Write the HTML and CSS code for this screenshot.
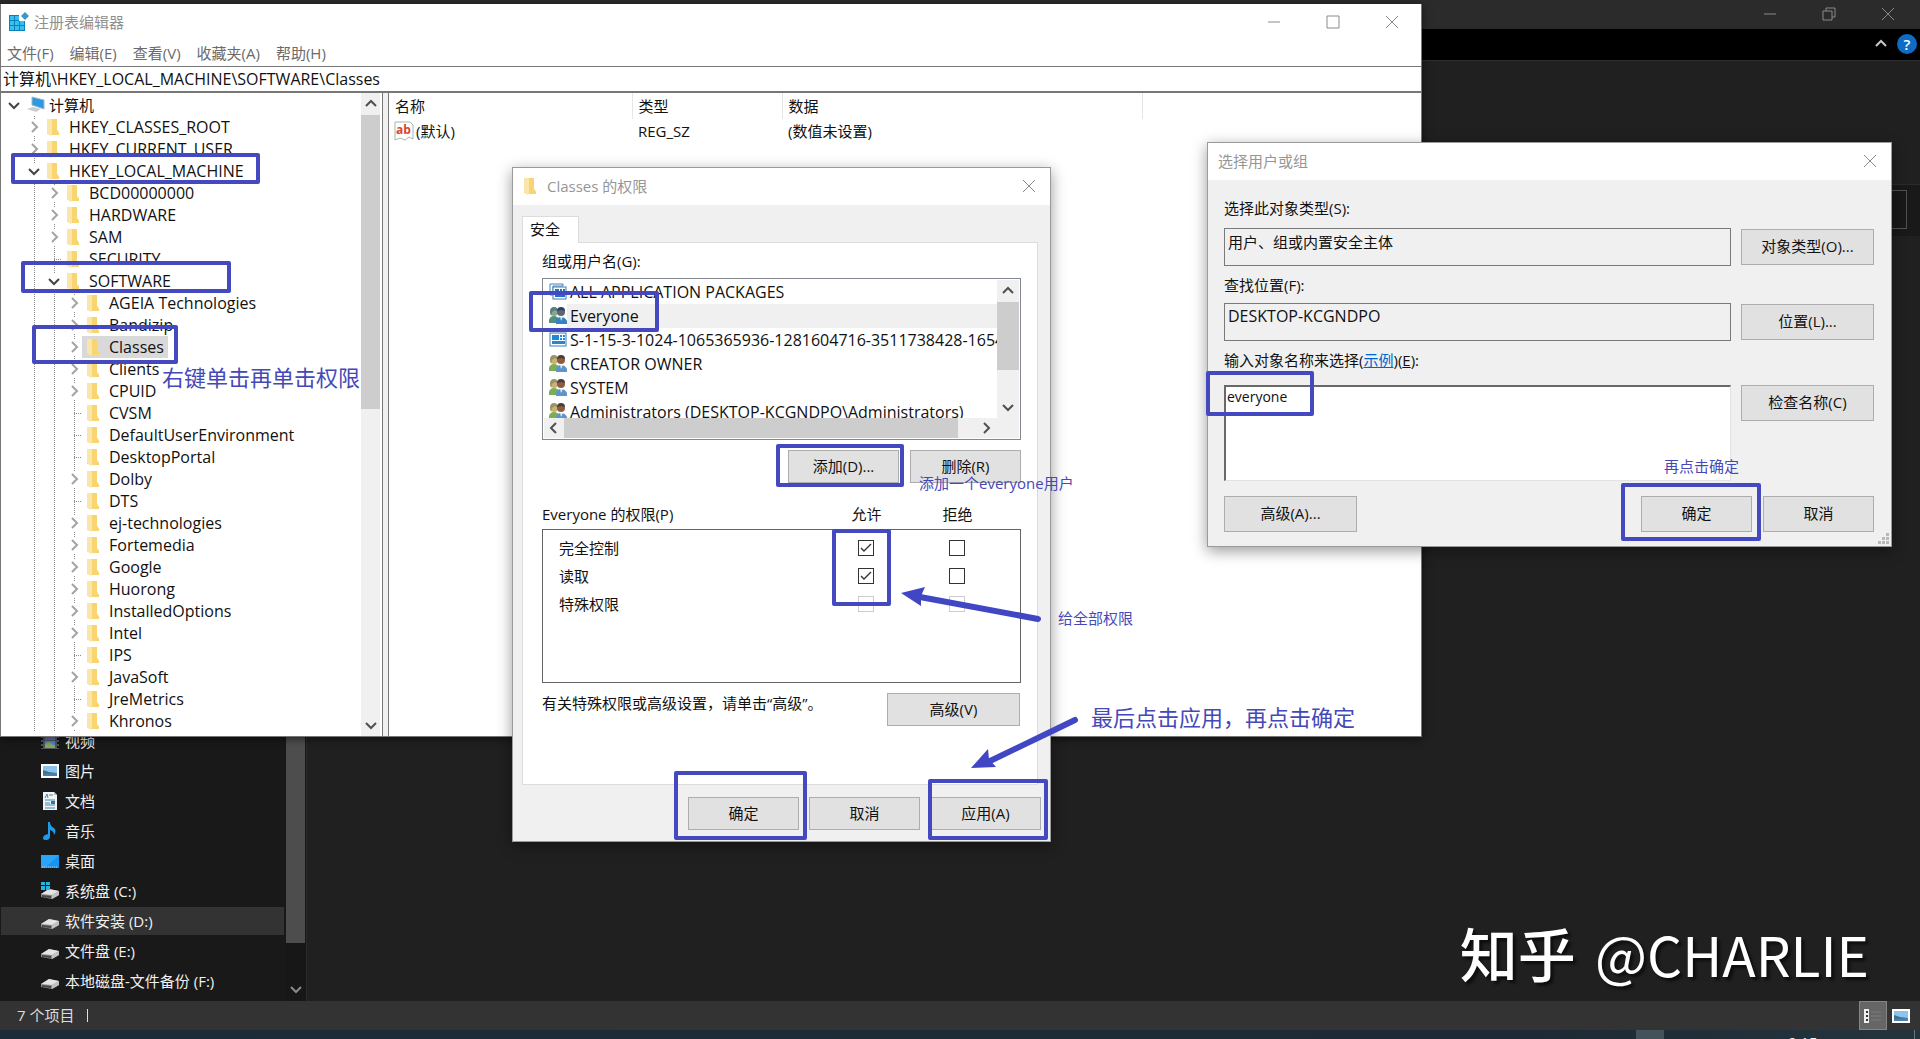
FILE: index.html
```html
<!DOCTYPE html>
<html lang="zh-CN">
<head>
<meta charset="utf-8">
<title>注册表编辑器</title>
<link rel="stylesheet" href="styles.css">
</head>
<body>
<svg class="defs" aria-hidden="true">
  <defs>
    <symbol id="folder" viewBox="0 0 18 18">
      <path d="M0 1h10v11l2 3v2H4L0 16z" fill="#f9dc86"/>
      <path d="M5 1h5v11l2 3v2H5z" fill="#f8d570"/>
      <path d="M0 1h4l1 1v15l-2 1-1-2-2-1z" fill="#fae6ab"/>
    </symbol>
    <symbol id="right" viewBox="0 0 16 16"><path d="M6 3l5 5-5 5" fill="none" stroke="#a3a3a3" stroke-width="2"/></symbol>
    <symbol id="down" viewBox="0 0 16 16"><path d="M3 6l5 5 5-5" fill="none" stroke="currentColor" stroke-width="2"/></symbol>
    <symbol id="up" viewBox="0 0 16 16"><path d="M3 10l5-5 5 5" fill="none" stroke="currentColor" stroke-width="2"/></symbol>
    <symbol id="close" viewBox="0 0 16 16"><path d="M2 2l12 12M14 2L2 14" fill="none" stroke="currentColor"/></symbol>
    <symbol id="users" viewBox="0 0 18 18">
      <circle cx="5" cy="5" r="4" fill="#c9b37d"/><path d="M1 5q0-5 4-5t4 5l-3-2-3 2-1 4z" fill="#9a9465"/>
      <path d="M0 16v-3q1-4 5-4t5 4v3z" fill="#7fae52"/>
      <circle cx="12" cy="5" r="4" fill="#8a5d42"/><path d="M8 4q0-4 4-4t4 4l-4-1z" fill="#4b3c37"/>
      <path d="M7 17v-3q1-4 5-4t6 4v3z" fill="#5e94cc"/><path d="M11 10l1 4 2-4z" fill="#dce9f5"/>
    </symbol>
    <symbol id="users-sel" viewBox="0 0 18 18">
      <circle cx="5" cy="5" r="4" fill="#8ba39a"/><path d="M1 5q0-5 4-5t4 5l-3-2-3 2-1 4z" fill="#587c7c"/>
      <path d="M0 16v-3q1-4 5-4t5 4v3z" fill="#518f78"/>
      <circle cx="12" cy="5" r="4" fill="#5c6670"/><path d="M8 4q0-4 4-4t4 4l-4-1z" fill="#2b4560"/>
      <path d="M7 17v-3q1-4 5-4t6 4v3z" fill="#3583c6"/><path d="M11 10l1 4 2-4z" fill="#c5ddf2"/>
    </symbol>
    <symbol id="package" viewBox="0 0 18 18">
      <rect x="1" y="2" width="16" height="13" fill="#fff" stroke="#3f7db8"/>
      <path d="M3 4h7v5H3zM11 4h2v2h-2zM14 4h2v2h-2zM11 7h2v2h-2zM14 7h2v2h-2zM3 10h13v3H3z" fill="#2586d4"/>
    </symbol>
    <symbol id="packages" viewBox="0 0 18 18">
      <path d="M1 12V1h13v2H4v9z" fill="#fff" stroke="#4b80b2"/>
      <rect x="4" y="4" width="13" height="12" fill="#fff" stroke="#3f7db8"/>
      <path d="M6 6h4v4H6zM11 6h2v2h-2zM14 6h2v2h-2zM11 9h5v2h-5zM6 11h10v3H6z" fill="#1f6fc4"/>
    </symbol>
    <symbol id="drive" viewBox="0 0 18 18">
      <path d="M0 12l8-5 10 2v4l-7 4-11-2z" fill="#8d8d8d"/>
      <path d="M0 12l8-5 10 2-7 4z" fill="#e4e4e4"/><path d="M1 13l9 1v2l-9-1z" fill="#474747"/><path d="M11 13l7-4v4l-7 4z" fill="#c2c2c2"/>
    </symbol>
    <symbol id="picture" viewBox="0 0 18 18">
      <rect y="2" width="18" height="14" fill="#fff"/><rect x="2" y="4" width="14" height="10" fill="#8cc4ee"/>
      <path d="M2 8l6 2 8 1v3H2z" fill="#3d7486"/><path d="M2 12l14-1v3H2z" fill="#4a7fb4"/>
    </symbol>
  </defs>
</svg>

<div class="explorer">
  <div class="ex-title">
    <button class="ico" aria-label="最小化"><svg viewBox="0 0 16 16"><path d="M2 8h12" stroke="currentColor"/></svg></button>
    <button class="ico" aria-label="还原"><svg viewBox="0 0 16 16"><path d="M2 5h9v9H2zM5 5V2h9v9h-3" fill="none" stroke="currentColor"/></svg></button>
    <button class="ico" aria-label="关闭"><svg><use href="#close"/></svg></button>
  </div>
  <div class="ribbon">
    <button class="ico" aria-label="折叠功能区"><svg><use href="#up"/></svg></button>
    <button class="help" aria-label="帮助">?</button>
  </div>
  <div class="ex-body">
    <nav class="side">
      <ul class="places">
        <li><svg viewBox="0 0 18 18"><path d="M0 1h18v16H0z" fill="#51565c"/><path d="M4 1h10v7H4z" fill="#6d6aa8"/><path d="M4 9h10v7H4z" fill="#4b86d8"/><path d="M4 12l4-2 6 4v2H4z" fill="#83a85d"/><path d="M1 2v15M17 2v15" stroke="#111" stroke-width="2" stroke-dasharray="2 2"/></svg>视频</li>
        <li><svg><use href="#picture"/></svg>图片</li>
        <li><svg viewBox="0 0 18 18"><path d="M2 0h11l3 3v15H2z" fill="#f3f3f3"/><path d="M13 0v3h3" fill="#bbb"/><path d="M4 6l2-4 1 4M8 3h4M4 8h10M4 11h5M4 13h10M4 16h10" fill="none" stroke="#3a8bb4"/><path d="M10 9h4v3h-4z" fill="#41729a"/></svg>文档</li>
        <li><svg viewBox="0 0 18 18"><path d="M9 0q0 4 4 6 3 3 0 7 0-4-4-5v6q0 4-4 4-3 0-3-2 0-3 5-4V0z" fill="#1e9bea"/></svg>音乐</li>
        <li><svg viewBox="0 0 18 18"><path d="M0 3h18v13H0z" fill="#1494f3"/><path d="M0 3h18L4 16H0z" fill="#2ba5fb"/><path d="M1 15h16" stroke="#9bd5ff" stroke-dasharray="1 1"/></svg>桌面</li>
        <li><svg viewBox="0 0 18 18"><use href="#drive"/><path d="M0 0h4v3H0zM5 0h4v3H5zM0 4h4v4H0zM5 4h4v4H5z" fill="#24b4e0"/></svg>系统盘 (C:)</li>
        <li class="on"><svg><use href="#drive"/></svg>软件安装 (D:)</li>
        <li><svg><use href="#drive"/></svg>文件盘 (E:)</li>
        <li><svg><use href="#drive"/></svg>本地磁盘-文件备份 (F:)</li>
      </ul>
      <div class="side-scroll"><span class="thumb"></span><svg><use href="#down"/></svg></div>
    </nav>
    <main class="files"><div class="searchbar"><input aria-label="搜索"></div></main>
  </div>
  <footer class="status">
    <span class="count">7 个项目</span><i class="bar"></i>
    <button class="view on" aria-label="详细信息"><svg viewBox="0 0 18 18"><path d="M0 2h5v14H0z" fill="#eee"/><path d="M2 4h2v2H2zM2 8h2v2H2zM2 12h2v2H2z" fill="#333"/><path d="M7 5h10M7 9h10M7 13h10" stroke="#7d7d7d"/></svg></button>
    <button class="view" aria-label="大图标"><svg><use href="#picture"/></svg></button>
  </footer>
  <div class="taskbar"><span class="task"></span><span class="clock">9:15</span></div>
  <p class="mark"><b>知乎</b> @CHARLIE</p>
</div>

<section class="regedit">
  <header class="re-title">
    <svg viewBox="0 0 20 20"><path d="M0 3h16v16H0z" fill="#0e7fb8"/><path d="M1 4h4v4H1zM6 4h4v4H6zM1 9h4v4H1zM6 9h4v4H6zM11 9h4v4h-4zM1 14h4v4H1zM6 14h4v4H6zM11 14h4v4h-4z" fill="#35c0ee"/><path d="M10 2h7v7h-7z" fill="#fff"/><path d="M12 4l4-4 4 4-4 4z" fill="#3d96c4"/></svg>
    <h1>注册表编辑器</h1>
    <button class="ico" aria-label="最小化"><svg viewBox="0 0 16 16"><path d="M2 8h12" stroke="currentColor"/></svg></button>
    <button class="ico" aria-label="最大化"><svg viewBox="0 0 16 16"><path d="M2 2h12v12H2z" fill="none" stroke="currentColor"/></svg></button>
    <button class="ico" aria-label="关闭"><svg><use href="#close"/></svg></button>
  </header>
  <nav class="menu"><button>文件(F)</button><button>编辑(E)</button><button>查看(V)</button><button>收藏夹(A)</button><button>帮助(H)</button></nav>
  <input class="address" aria-label="地址" value="计算机\HKEY_LOCAL_MACHINE\SOFTWARE\Classes">
  <div class="panes">
    <div class="tree-pane">
      <ul class="tree">
        <li><div class="row root"><svg class="tw"><use href="#down"/></svg><span class="node"><svg viewBox="0 0 18 18"><path d="M5 1l12 3v9L5 9z" fill="#2f98e2" stroke="#9cb7c9"/><path d="M0 13l6-2 8 2-5 3z" fill="#c9ced2"/></svg>计算机</span></div>
          <ul>
            <li><div class="row"><svg class="tw"><use href="#right"/></svg><span class="node"><svg><use href="#folder"/></svg>HKEY_CLASSES_ROOT</span></div></li>
            <li><div class="row"><svg class="tw"><use href="#right"/></svg><span class="node"><svg><use href="#folder"/></svg>HKEY_CURRENT_USER</span></div></li>
            <li><div class="row"><svg class="tw"><use href="#down"/></svg><span class="node"><svg><use href="#folder"/></svg>HKEY_LOCAL_MACHINE</span></div>
              <ul>
                <li><div class="row"><svg class="tw"><use href="#right"/></svg><span class="node"><svg><use href="#folder"/></svg>BCD00000000</span></div></li>
                <li><div class="row"><svg class="tw"><use href="#right"/></svg><span class="node"><svg><use href="#folder"/></svg>HARDWARE</span></div></li>
                <li><div class="row"><svg class="tw"><use href="#right"/></svg><span class="node"><svg><use href="#folder"/></svg>SAM</span></div></li>
                <li><div class="row"><i class="leaf"></i><span class="node"><svg><use href="#folder"/></svg>SECURITY</span></div></li>
                <li><div class="row"><svg class="tw"><use href="#down"/></svg><span class="node"><svg><use href="#folder"/></svg>SOFTWARE</span></div>
                  <ul>
                    <li><div class="row"><svg class="tw"><use href="#right"/></svg><span class="node"><svg><use href="#folder"/></svg>AGEIA Technologies</span></div></li>
                    <li><div class="row"><svg class="tw"><use href="#right"/></svg><span class="node"><svg><use href="#folder"/></svg>Bandizip</span></div></li>
                    <li><div class="row"><svg class="tw"><use href="#right"/></svg><span class="node sel"><svg><use href="#folder"/></svg>Classes</span></div></li>
                    <li><div class="row"><svg class="tw"><use href="#right"/></svg><span class="node"><svg><use href="#folder"/></svg>Clients</span></div></li>
                    <li><div class="row"><svg class="tw"><use href="#right"/></svg><span class="node"><svg><use href="#folder"/></svg>CPUID</span></div></li>
                    <li><div class="row"><i class="leaf"></i><span class="node"><svg><use href="#folder"/></svg>CVSM</span></div></li>
                    <li><div class="row"><i class="leaf"></i><span class="node"><svg><use href="#folder"/></svg>DefaultUserEnvironment</span></div></li>
                    <li><div class="row"><i class="leaf"></i><span class="node"><svg><use href="#folder"/></svg>DesktopPortal</span></div></li>
                    <li><div class="row"><svg class="tw"><use href="#right"/></svg><span class="node"><svg><use href="#folder"/></svg>Dolby</span></div></li>
                    <li><div class="row"><i class="leaf"></i><span class="node"><svg><use href="#folder"/></svg>DTS</span></div></li>
                    <li><div class="row"><svg class="tw"><use href="#right"/></svg><span class="node"><svg><use href="#folder"/></svg>ej-technologies</span></div></li>
                    <li><div class="row"><svg class="tw"><use href="#right"/></svg><span class="node"><svg><use href="#folder"/></svg>Fortemedia</span></div></li>
                    <li><div class="row"><svg class="tw"><use href="#right"/></svg><span class="node"><svg><use href="#folder"/></svg>Google</span></div></li>
                    <li><div class="row"><svg class="tw"><use href="#right"/></svg><span class="node"><svg><use href="#folder"/></svg>Huorong</span></div></li>
                    <li><div class="row"><svg class="tw"><use href="#right"/></svg><span class="node"><svg><use href="#folder"/></svg>InstalledOptions</span></div></li>
                    <li><div class="row"><svg class="tw"><use href="#right"/></svg><span class="node"><svg><use href="#folder"/></svg>Intel</span></div></li>
                    <li><div class="row"><i class="leaf"></i><span class="node"><svg><use href="#folder"/></svg>IPS</span></div></li>
                    <li><div class="row"><svg class="tw"><use href="#right"/></svg><span class="node"><svg><use href="#folder"/></svg>JavaSoft</span></div></li>
                    <li><div class="row"><i class="leaf"></i><span class="node"><svg><use href="#folder"/></svg>JreMetrics</span></div></li>
                    <li><div class="row"><svg class="tw"><use href="#right"/></svg><span class="node"><svg><use href="#folder"/></svg>Khronos</span></div></li>
                  </ul>
                </li>
              </ul>
            </li>
          </ul>
        </li>
      </ul>
      <div class="vscroll"><svg><use href="#up"/></svg><span class="thumb"></span><svg><use href="#down"/></svg></div>
    </div>
    <div class="values">
      <table>
        <colgroup><col class="c-name"><col class="c-type"><col class="c-data"><col></colgroup>
        <thead><tr><th>名称</th><th>类型</th><th>数据</th><th></th></tr></thead>
        <tbody><tr><td><span class="val"><svg viewBox="0 0 20 20"><path d="M1 1h15l3 3v14l-4-2-4 3-5-2-5 2z" fill="#fff" stroke="#a9b3ab"/><text x="2" y="13" font-size="12" font-weight="700" fill="#d8452c">ab</text></svg>(默认)</span></td><td>REG_SZ</td><td>(数值未设置)</td><td></td></tr></tbody>
      </table>
    </div>
  </div>
</section>

<section class="dialog perms">
  <header><svg><use href="#folder"/></svg><h2>Classes 的权限</h2><button class="ico" aria-label="关闭"><svg><use href="#close"/></svg></button></header>
  <div class="tabs"><button class="tab">安全</button></div>
  <div class="sheet">
    <p class="lbl">组或用户名(G):</p>
    <div class="userbox">
      <ul class="users">
        <li><svg><use href="#packages"/></svg><span>ALL APPLICATION PACKAGES</span></li>
        <li class="sel"><svg><use href="#users-sel"/></svg><span>Everyone</span></li>
        <li><svg><use href="#package"/></svg><span>S-1-15-3-1024-1065365936-1281604716-3511738428-1654</span></li>
        <li><svg><use href="#users"/></svg><span>CREATOR OWNER</span></li>
        <li><svg><use href="#users"/></svg><span>SYSTEM</span></li>
        <li><svg><use href="#users"/></svg><span>Administrators (DESKTOP-KCGNDPO\Administrators)</span></li>
      </ul>
      <div class="vscroll"><svg><use href="#up"/></svg><span class="thumb"></span><svg><use href="#down"/></svg></div>
      <div class="hscroll"><svg class="left"><use href="#down"/></svg><span class="thumb"></span><svg class="rt"><use href="#down"/></svg></div>
    </div>
    <div class="pair"><button class="btn">添加(D)...</button><button class="btn">删除(R)</button></div>
    <div class="phead"><span>Everyone 的权限(P)</span><span class="mid">允许</span><span class="mid">拒绝</span></div>
    <div class="pbox">
      <div class="prow"><span>完全控制</span><input type="checkbox" checked aria-label="完全控制 允许"><input type="checkbox" aria-label="完全控制 拒绝"></div>
      <div class="prow"><span>读取</span><input type="checkbox" checked aria-label="读取 允许"><input type="checkbox" aria-label="读取 拒绝"></div>
      <div class="prow"><span>特殊权限</span><input type="checkbox" disabled aria-label="特殊权限 允许"><input type="checkbox" disabled aria-label="特殊权限 拒绝"></div>
    </div>
    <div class="adv"><p class="lbl">有关特殊权限或高级设置，请单击“高级”。</p><button class="btn wide">高级(V)</button></div>
  </div>
  <footer><button class="btn">确定</button><button class="btn">取消</button><button class="btn">应用(A)</button></footer>
</section>

<section class="dialog picker">
  <header><h2>选择用户或组</h2><button class="ico" aria-label="关闭"><svg><use href="#close"/></svg></button></header>
  <div class="form">
    <label class="lbl" for="otype">选择此对象类型(S):</label>
    <div class="line first"><input id="otype" readonly value="用户、组或内置安全主体"><button class="btn wide">对象类型(O)...</button></div>
    <label class="lbl" for="place">查找位置(F):</label>
    <div class="line"><input class="latin" id="place" readonly value="DESKTOP-KCGNDPO"><button class="btn wide">位置(L)...</button></div>
    <label class="lbl" for="names">输入对象名称来选择(<a href="#names">示例</a>)(<u>E</u>):</label>
    <div class="line area"><textarea id="names">everyone</textarea><button class="btn wide">检查名称(C)</button></div>
    <footer><button class="btn wide">高级(A)...</button><span class="grow"></span><button class="btn">确定</button><button class="btn">取消</button></footer>
  </div>
  <svg class="grip" viewBox="0 0 12 12"><path d="M9 0h3v3H9zM5 4h3v3H5zM9 4h3v3H9zM1 8h3v3H1zM5 8h3v3H5zM9 8h3v3H9z" fill="#b9b9b9"/></svg>
</section>

<div class="notes">
  <i class="box hklm"></i><i class="box software"></i><i class="box classes"></i>
  <i class="box everyone"></i><i class="box add"></i><i class="box checks"></i><i class="box ok"></i><i class="box apply"></i>
  <i class="box typed"></i><i class="box ok2"></i>
  <svg class="arrows" viewBox="900 580 200 200">
    <path d="M1038 619L920 597M1075 720L988 762" stroke="#4146c4" stroke-width="6" stroke-linecap="round"/>
    <path d="M901 593l24-6-4 9 0 10zM971 768l17-19 1 10 7 8z" fill="#4146c4"/>
  </svg>
  <span class="note big n-menu">右键单击再单击权限</span>
  <span class="note n-add">添加一个everyone用户</span>
  <span class="note n-all">给全部权限</span>
  <span class="note big n-last">最后点击应用，再点击确定</span>
  <span class="note n-ok">再点击确定</span>
</div>
</body>
</html>
```
FILE: styles.css
```css
* { box-sizing: border-box; }
body {
  margin: 0;
  height: 100vh;
  overflow: hidden;
  position: relative;
  background: #202020;
  color: #111;
  font: 15px/20px "Open Sans", "Noto Sans CJK SC", sans-serif;
}
ul { list-style: none; margin: 0; padding: 0; }
h1, h2, p { margin: 0; font-size: 15px; font-weight: 400; line-height: 20px; }
button, input, textarea { font: inherit; color: inherit; margin: 0; border-radius: 0; outline: 0; }
button { padding: 0; border: 0; background: none; }
svg { flex: none; width: 18px; height: 18px; display: block; }
.defs { position: absolute; width: 0; height: 0; }
.ico { width: 20px; height: 20px; display: grid; place-items: center; color: #8a8a8a; }
.ico svg { width: 16px; height: 16px; }

/* file explorer behind the other windows */
.explorer { height: 100%; display: flex; flex-direction: column; color: #f0f0f0; }
.ex-title { height: 29px; flex: none; background: #2b2b2b; display: flex; justify-content: flex-end; align-items: center; gap: 39px; padding: 0 22px 2px 0; }
.ribbon { height: 32px; flex: none; background: #000; border-bottom: 1px solid #2f2f2f; display: flex; justify-content: flex-end; align-items: center; gap: 6px; padding: 0 3px 2px 0; }
.ribbon .ico { color: #c8c8c8; }
.help { width: 20px; height: 20px; border-radius: 50%; background: #0f6cc4; color: #fff; font-weight: 600; }
.ex-body { flex: 1; min-height: 0; display: flex; }
.side { width: 307px; background: #191919; border-right: 1px solid #2a2a2a; display: flex; }
.places { flex: 1; display: flex; flex-direction: column; justify-content: flex-end; padding: 0 1px 6px; }
.places li { height: 28px; margin-top: 2px; flex: none; display: flex; align-items: center; gap: 6px; padding-left: 40px; }
.places .on { background: #333; }
.side-scroll { width: 21px; display: flex; flex-direction: column; align-items: center; background: #171717; color: #8a8a8a; }
.side-scroll .thumb { flex: 1; width: 19px; background: #4d4d4d; }
.side-scroll svg { width: 16px; height: 16px; margin: 38px 0 4px; }
.files { flex: 1; padding-top: 123px; }
.searchbar { height: 52px; border-top: 1px solid #2b2b2b; background: #191919; padding: 5px 13px 0 0; display: flex; justify-content: flex-end; }
.searchbar input { width: 300px; height: 39px; border: 1px solid #535353; background: #191919; }
.status { height: 29px; flex: none; background: #333; display: flex; align-items: center; padding: 0 5px 0 17px; color: #dcdcdc; }
.count { margin-right: 13px; padding-bottom: 2px; }
.bar { width: 1px; height: 13px; background: #e0e0e0; margin-right: auto; }
.view { width: 28px; height: 29px; display: grid; place-items: center; }
.view.on { background: #666; border: 1px solid #858585; }
.taskbar { height: 9px; flex: none; overflow: hidden; background: linear-gradient(90deg, #1c2b39, #1d2a35 80%, #24343d); display: flex; justify-content: flex-end; }
.task { width: 28px; background: #44525a; margin-right: 124px; }
.clock { width: 127px; padding-top: 2px; border-right: 1px solid #6b767c; margin-right: 5px; }
.mark { position: absolute; right: 51px; bottom: 50px; font: 55px/72px "Noto Sans CJK SC", sans-serif; color: #fff; text-shadow: 3px 3px 3px #0009; white-space: nowrap; }
.mark b { font-size: 58px; font-weight: 500; margin-right: 7px; }

/* registry editor */
.regedit { position: absolute; left: 0; top: 4px; right: 498px; background: #fff; border: 1px solid #777; border-width: 0 1px 1px; box-shadow: 0 2px 8px #0008; }
.re-title { height: 38px; display: flex; align-items: center; gap: 5px; padding: 0 19px 2px 8px; color: #8f8f8f; }
.re-title > svg { width: 20px; height: 20px; }
.re-title h1 { flex: 1; }
.re-title .ico { margin-left: 34px; }
.menu { height: 24px; display: flex; align-items: center; gap: 16px; padding: 0 0 2px 6px; color: #6b6b6b; }
.address { display: block; width: 100%; height: 26px; padding: 0 2px 2px; border: 1px solid #777; border-width: 1px 0; background: #fff; font-size: 16px; }
.panes { display: flex; background: #f0f0f0; border-top: 1px solid #777; }
.tree-pane { width: 382px; display: flex; background: #fff; border-right: 1px solid #777; padding-right: 2px; }
.tree { flex: 1; padding: 1px 0 4px 5px; font-size: 16px; }
.tree ul { padding-left: 20px; background: repeating-linear-gradient(#8a8a8a 0 1px, #fff 1px 2px) 28px 0 / 1px 100% no-repeat; }
.row { height: 22px; display: flex; align-items: center; }
.root { font-size: 15px; }
.tw { width: 16px; height: 16px; background: #fff; color: #444; }
.leaf { width: 8px; height: 1px; margin-left: 8px; background: repeating-linear-gradient(90deg, #8a8a8a 0 1px, #fff 1px 2px); }
.node { display: flex; align-items: center; gap: 4px; height: 22px; padding: 0 4px 0 5px; white-space: nowrap; }
.node.sel { background: #d9d9d9; }
.vscroll { width: 19px; display: flex; flex-direction: column; align-items: center; background: #f0f0f0; color: #505050; }
.vscroll svg { width: 16px; height: 16px; margin: 3px 0; }
.vscroll .thumb { width: 100%; height: 294px; margin-bottom: auto; background: #cdcdcd; }
.values { flex: 1; margin-left: 5px; border-left: 1px solid #777; background: #fff; }
.values table { width: 100%; table-layout: fixed; border-collapse: collapse; }
.c-name { width: 243px; }
.c-type { width: 150px; }
.c-data { width: 360px; }
.values th, .values td { height: 26px; padding: 0 6px; text-align: left; font-weight: 400; }
.values th { border-right: 1px solid #e5e5e5; }
.values th:last-child { border: 0; }
.values td { height: 24px; }
.values td:first-child { padding-left: 5px; }
.val { display: flex; align-items: center; gap: 2px; }
.val svg { width: 20px; height: 20px; }

/* dialogs */
.dialog { position: absolute; background: #f0f0f0; border: 1px solid #9a9a9a; box-shadow: 0 4px 14px #0006; }
.dialog > header { height: 37px; background: #fff; color: #969696; display: flex; align-items: center; padding: 0 11px 2px 10px; }
.dialog > header h2 { flex: 1; }
.btn { width: 111px; height: 33px; padding-bottom: 2px; background: #e1e1e1; border: 1px solid #adadad; }
.btn.wide { width: 133px; }
.perms { left: 512px; top: 167px; width: 539px; }
.perms header svg { margin: 0 5px 0 1px; }
.perms > header > .ico svg { margin: 0; }
.tabs { padding: 11px 9px 0; display: flex; }
.tab { width: 57px; height: 27px; background: #fff; border: 1px solid #dcdcdc; border-bottom: 0; text-align: left; padding: 0 0 2px 7px; margin-bottom: -1px; z-index: 1; }
.sheet { margin: 0 12px 0 9px; padding: 8px 16px 58px 19px; background: #fff; border: 1px solid #dcdcdc; }
.userbox { margin-top: 7px; height: 162px; border: 1px solid #828790; padding: 1px; display: grid; grid-template: 138px 1fr / minmax(0, 1fr) 22px; }
.users { overflow: hidden; font-size: 16px; }
.users li { height: 24px; display: flex; align-items: center; padding-left: 5px; white-space: nowrap; }
.users li span { flex: 1; line-height: 24px; padding-left: 3px; }
.users .sel span { background: #f0f0f0; }
.userbox .vscroll { width: 22px; }
.userbox .thumb { height: 68px; }
.hscroll { grid-column: 1 / 3; background: #f0f0f0; display: flex; align-items: center; color: #505050; }
.hscroll svg { width: 16px; height: 16px; margin: 0 2px; }
.hscroll .left { transform: rotate(90deg); }
.hscroll .rt { transform: rotate(-90deg); margin: 0 25px 0 auto; }
.hscroll .thumb { height: 100%; width: 394px; background: #cdcdcd; }
.pair { display: flex; justify-content: flex-end; gap: 11px; margin-top: 10px; }
.phead, .prow { display: grid; grid-template-columns: 1fr 91px 91px; padding-right: 18px; align-items: center; }
.phead { margin: 21px 0 5px; }
.mid { text-align: center; }
.pbox { height: 154px; border: 1px solid #646464; padding-top: 4px; }
.prow { height: 28px; padding-left: 16px; }
.prow input { appearance: none; width: 16px; height: 16px; border: 1px solid #333; background: #fff; justify-self: center; }
.prow input:checked { background: url("data:image/svg+xml,%3Csvg xmlns='http://www.w3.org/2000/svg' viewBox='0 0 14 14'%3E%3Cpath d='M2 7l3 3 7-7' fill='none' stroke='%23333' stroke-width='1.4'/%3E%3C/svg%3E"); }
.prow input:disabled { border-color: #ccc; }
.adv { display: flex; justify-content: space-between; margin: 10px 1px 0 0; }
.perms > footer { display: flex; justify-content: flex-end; gap: 10px; padding: 12px 9px 11px; }

.picker { left: 1207px; top: 142px; width: 685px; }
.form { padding: 18px 17px 14px 16px; display: flex; flex-direction: column; }
.line { display: flex; justify-content: space-between; align-items: center; gap: 10px; margin: 8px 0 9px; }
.first { margin-top: 10px; }
.line input { flex: 1; height: 38px; padding: 0 3px 12px; border: 1px solid #7a7a7a; background: #f0f0f0; }
.line .latin { font-size: 16px; }
.picker .btn { height: 36px; }
.picker a { color: #0066cc; }
.area { align-items: flex-start; margin: 15px 0; }
.area textarea { flex: 1; height: 96px; resize: none; padding: 0 1px; border: 1px solid #e3e3e3; border-top: 2px solid #696969; border-left: 2px solid #696969; background: #fff; font-size: 14px; }
.picker footer { display: flex; gap: 11px; }
.grow { flex: 1; }
.grip { position: absolute; right: 2px; bottom: 1px; width: 12px; height: 12px; }

/* blue walkthrough marks drawn over the windows */
.notes { position: absolute; inset: 0; pointer-events: none; color: #4549b8; }
.box { position: absolute; border: 4px solid #4549bf; border-radius: 2px; }
.hklm { left: 11px; top: 153px; width: 249px; height: 31px; }
.software { left: 21px; top: 261px; width: 210px; height: 32px; }
.classes { left: 32px; top: 325px; width: 146px; height: 39px; }
.everyone { left: 529px; top: 291px; width: 130px; height: 41px; }
.add { left: 776px; top: 444px; width: 128px; height: 43px; }
.checks { left: 832px; top: 529px; width: 59px; height: 77px; }
.ok { left: 674px; top: 771px; width: 133px; height: 69px; }
.apply { left: 928px; top: 779px; width: 120px; height: 61px; }
.typed { left: 1206px; top: 371px; width: 108px; height: 45px; }
.ok2 { left: 1621px; top: 483px; width: 140px; height: 58px; }
.arrows { position: absolute; left: 900px; top: 580px; width: 200px; height: 200px; }
.note { position: absolute; white-space: nowrap; }
.big { font-size: 22px; line-height: 30px; }
.n-menu { left: 162px; top: 362px; }
.n-add { left: 919px; top: 473px; }
.n-all { left: 1058px; top: 608px; }
.n-last { left: 1091px; top: 702px; }
.n-ok { left: 1664px; top: 456px; }
```
